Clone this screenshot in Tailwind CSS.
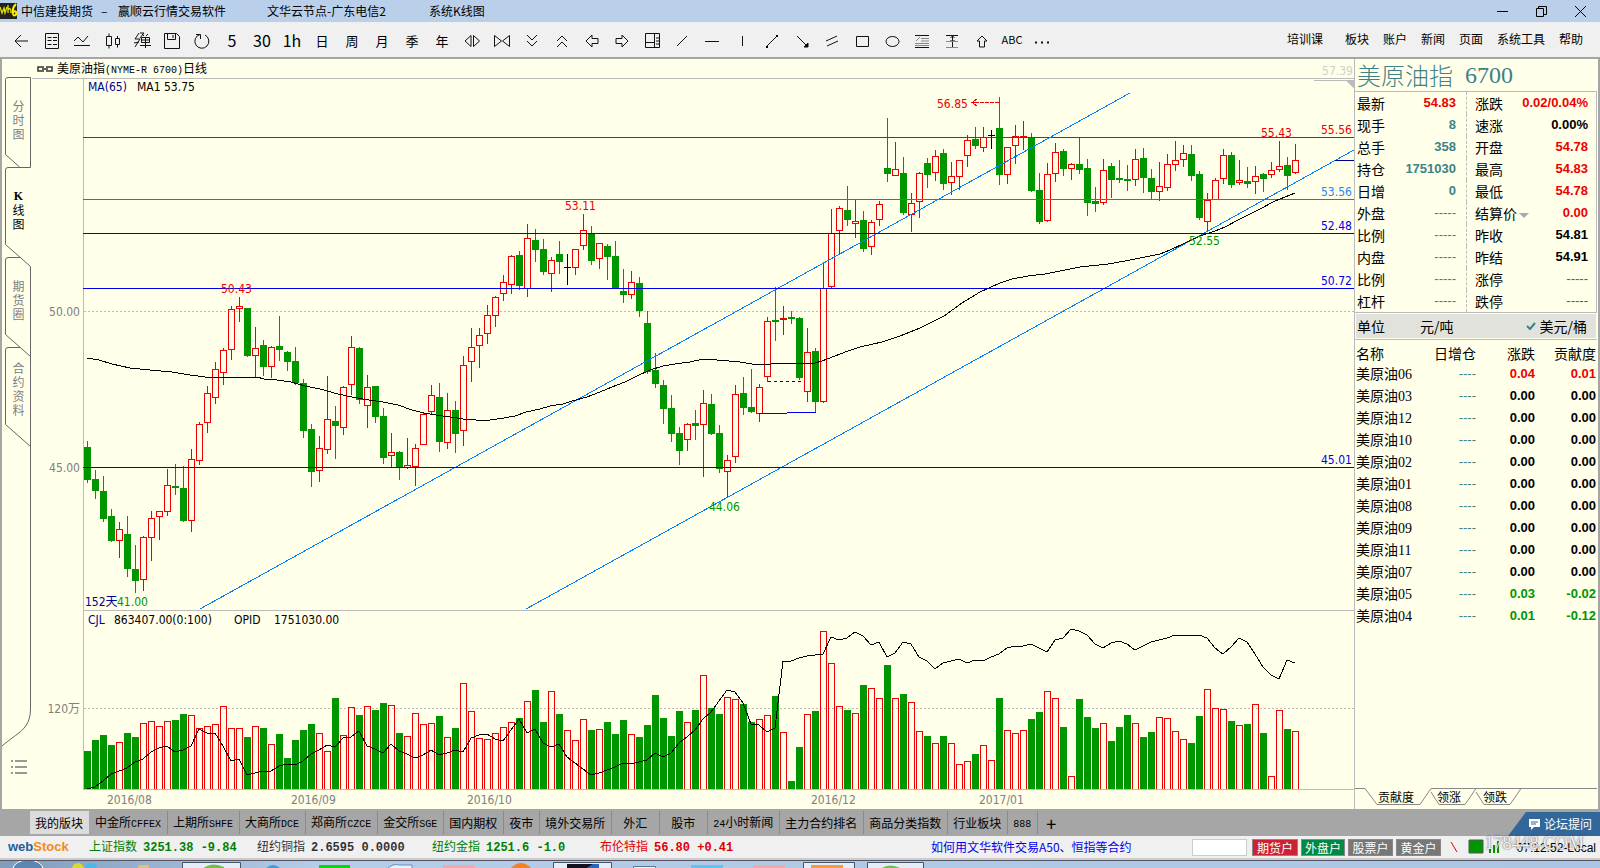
<!DOCTYPE html>
<html lang="zh-CN">
<head>
<meta charset="utf-8">
<title>中信建投期货 - 赢顺云行情交易软件</title>
<script src="https://cdn.jsdelivr.net/npm/@tailwindcss/browser@4"></script>
</head>
<body class="h-screen flex flex-col overflow-hidden bg-[#ffffea] font-['Noto_Sans_CJK_SC',sans-serif] text-xs text-black">

<header class="h-[22px] shrink-0 flex items-center bg-[#bad0ea] leading-5">
  <svg class="w-[17px] h-4 mr-1" viewBox="0 0 17 16"><rect width="17" height="16" fill="#222"/><path d="M0 4l2 6 2-5 1 5 2-6M8 2v8M8 7c2-3 3-1 3 3" stroke="#e8e000" fill="none" stroke-width="1.3"/><path d="M16 1c-3 3-4 6-3 10c1 3 4 1 3-2c-1-2-3 0-3 1" stroke="#ffee00" fill="none" stroke-width="2"/></svg>
  <h1 class="w-[246px] flex"><span class="w-20">中信建投期货</span><span class="w-[17px]">–</span>赢顺云行情交易软件</h1>
  <span class="w-[162px]">文华云节点-广东电信2</span>
  <span class="flex-1">系统K线图</span>
  <button aria-label="最小化" class="w-[39px] grid place-items-center"><svg width="11" height="11" stroke="#000"><path d="M0 5.5h11"/></svg></button>
  <button aria-label="还原" class="w-[39px] grid place-items-center"><svg width="11" height="11" fill="none" stroke="#000"><path d="M.5 2.5h7v8h-7zM2.5 2.5v-2h8v8h-3"/></svg></button>
  <button aria-label="关闭" class="w-[39px] grid place-items-center"><svg width="11" height="11" stroke="#000"><path d="M0 0l11 11M11 0L0 11"/></svg></button>
</header>

<nav class="h-[37px] shrink-0 flex items-center bg-[#f0f0f0] border-b-2 border-[#a6a6a6] pl-[7px]">
  <div id="tools" class="flex flex-1 items-center text-[13px]"></div>
  <div class="flex items-center pr-[17px] pb-0.5">
    <a href="#" class="mr-[22px]">培训课</a><a href="#" class="mr-[14px]">板块</a><a href="#" class="mr-[14px]">账户</a><a href="#" class="mr-[14px]">新闻</a><a href="#" class="mr-[14px]">页面</a><a href="#" class="mr-[14px]">系统工具</a><a href="#">帮助</a>
  </div>
</nav>

<main class="flex-1 min-h-0 flex border-x-2 border-[#a6a6a6]">
  <nav class="relative w-[30px] shrink-0 pt-[18px] flex flex-col">
    <svg class="absolute left-0 top-0 w-[30px] h-[700px]" viewBox="2 59 30 700" fill="none" stroke="#666">
      <path d="M19.5 167L5.500 154.500V79.500Q5.500 77.500 8 77.500H30.500V167.500H8Q5.500 167.500 5.500 170V244.500L30.500 266.500V708C30.500 730 18 732 2 746"/>
      <path d="M20 257.500H8Q5.500 257.500 5.500 260V334.500L30.500 356.500M20 347.500H8Q5.500 347.500 5.500 350V424.500L30.500 446.500"/>
    </svg>
    <button class="relative h-[90px] w-[33px] flex flex-col items-center pt-[22px] leading-[14px] text-[#808080]"><span>分</span><span>时</span><span>图</span></button>
    <button class="relative h-[90px] w-[33px] flex flex-col items-center pt-[22px] leading-[14px]"><b class="font-['Liberation_Serif']">K</b><span>线</span><span>图</span></button>
    <button class="relative h-[90px] w-[33px] flex flex-col items-center pt-[22px] leading-[14px] text-[#808080]"><span>期</span><span>货</span><span>圈</span></button>
    <button class="relative h-[90px] w-[33px] flex flex-col items-center pt-[14px] leading-[14px] text-[#808080]"><span>合</span><span>约</span><span>资</span><span>料</span></button>
    <button aria-label="列表" class="mt-auto mb-[35px] ml-[9px] w-4 h-[14px]"><svg width="16" height="14" stroke="#999" stroke-width="2"><path d="M0 1h2M4 1h12M0 7h2M4 7h12M0 13h2M4 13h12"/></svg></button>
  </nav>

  <section class="flex-1 min-w-0 flex flex-col">
    <div class="h-5 shrink-0 flex items-center border-b border-[#bbb]">
      <svg class="ml-[5px] mr-1" width="16" height="6" fill="none" stroke="#333" stroke-width="1.500"><path d="M7 1H1v4h6M9 1h6v4H9M5 3h6"/></svg>
      <h2>美原油指<span class="font-['Liberation_Mono'] text-[10px]">(NYME-R 6700)</span>日线</h2>
      <span class="ml-auto mr-px text-[#d0d0cc] pt-1 font-['DejaVu_Sans_Condensed','Open_Sans',sans-serif]">57.39</span>
    </div>
    <svg id="chart" class="w-full flex-1 min-h-0 text-xs font-['DejaVu_Sans_Condensed','Noto_Sans_CJK_SC',sans-serif]" viewBox="32 79 1322 730" shape-rendering="crispEdges">
      <g stroke="#bbb" fill="none"><path d="M83.500 79V789.500H1354M83 610.500H1354M1314 80.500H1354"/><path stroke-dasharray="2 2" d="M84 311.500H1354M84 708.500H1354"/></g>
      <path d="M1345 80h9v9z" fill="#bbb"/>
      <g id="bars"></g>
      <g fill="none">
        <path stroke="#ee0000" d="M83 137.500H1354"/>
        <path stroke="#0080ff" d="M83 199.500H1354M200 609L1130 93M526 609L1354 150"/>
        <path stroke="#0000ee" d="M83 233.500H1354M83 288.500H1354M83 467.500H1354M759 413.500H787M787 412.500H816"/>
        <path stroke="#000090" d="M1335 160.500H1354"/>
        <path stroke="#0000dd" stroke-dasharray="3 3" d="M768 381.500H801"/>
        <path stroke="#ee0000" stroke-dasharray="4 1" d="M975 102.500H999"/><path stroke="#ee0000" d="M977 99L972 102.500L977 106M976 102.500h-4"/>
        <polyline stroke="#000" points="87,358 99,360 112,364 130,368 150,370 172,372 190,375 205,377 223,378 257,377 264,379 277,380 291,382 305,386 320,389 338,394 352,397 369,400 383,402 398,405 412,410 424,413 436,415 450,417 463,419 476,420 490,420 504,418 515,416 526,412 540,409 550,406 563,404 572,401 587,397 600,392 612,387 625,382 637,376 650,370 663,366 675,364 690,362 703,359 717,360 740,362 752,364 763,365 780,363 815,363 822,361 835,356 848,351 860,347 882,342 900,336 920,328 944,316 962,303 980,292 1000,283 1012,279 1028,276 1045,274 1070,269 1080,267 1108,264 1125,261 1140,258 1160,254 1170,250 1185,243 1200,236 1215,231 1225,227 1240,219 1260,209 1275,201 1295,193"/>
        <polyline id="opid" stroke="#000"/>
      </g>
      <g fill="#808080">
        <text x="80" y="316" text-anchor="end">50.00</text><text x="80" y="472" text-anchor="end">45.00</text><text x="80" y="713" text-anchor="end">120万</text>
        <text x="107" y="804">2016/08</text><text x="291" y="804">2016/09</text><text x="467" y="804">2016/10</text><text x="811" y="804">2016/12</text><text x="979" y="804">2017/01</text>
      </g>
      <g fill="#000090"><text x="88" y="91">MA(65)</text><text x="85" y="606">152天</text><text x="88" y="624">CJL</text></g>
      <text x="137" y="91">MA1 53.75</text><text x="114" y="624">863407.00(0:100)</text><text x="234" y="624">OPID</text><text x="274" y="624">1751030.00</text>
      <g fill="#ee0000"><text x="221" y="293">50.43</text><text x="565" y="210">53.11</text><text x="937" y="108">56.85</text><text x="1261" y="137">55.43</text><text x="1321" y="134">55.56</text></g>
      <g fill="#009600"><text x="117" y="606">41.00</text><text x="709" y="511">44.06</text><text x="1189" y="245">52.55</text></g>
      <g fill="#0000ee"><text x="1321" y="230">52.48</text><text x="1321" y="285">50.72</text><text x="1321" y="464">45.01</text></g>
      <text x="1321" y="196" fill="#2288ee">53.56</text>
    </svg>
  </section>

  <aside class="w-[244px] shrink-0 flex flex-col border-l border-[#bbb] text-sm">
    <h2 class="h-8 flex items-center pl-[2px] text-2xl leading-8 text-[#3e8287] font-light whitespace-pre">美原油指<span class="font-['Liberation_Serif'] ml-3">6700</span></h2>
    <div class="flex border-t border-r border-[#bbb] mr-px leading-[20px]">
      <table class="w-[112px] shrink-0 border-r border-dashed border-[#bbb]"><tbody id="q1"></tbody></table>
      <table class="block flex-1 min-w-0"><tbody id="q2" class="block"></tbody></table>
    </div>
    <div class="border-y border-[#bbb] py-px mr-px">
      <div class="h-6 mx-px flex items-center bg-[#e2e2dc] pl-px"><span class="w-[63px]">单位</span><button>元/吨</button><button class="ml-auto mr-[9px] flex items-center gap-1"><svg width="10" height="8" fill="none" stroke="#3e8287" stroke-width="2"><path d="M1 4l3 3 5-6"/></svg>美元/桶</button></div>
    </div>
    <table class="w-[240px] ml-px leading-[20px]"><thead><tr class="h-[23px] align-bottom"><th class="w-[57px] font-normal text-left">名称</th><th class="font-normal text-right">日增仓</th><th class="w-[59px] font-normal text-right">涨跌</th><th class="w-[61px] font-normal text-right">贡献度</th></tr></thead><tbody id="q3"></tbody></table>
    <div class="mt-auto mb-0.5 h-5 flex items-center relative text-xs pl-[23px]">
      <svg class="absolute inset-0" width="242" height="20" fill="none" stroke="#888"><path d="M0 1.500H10L22 17.500H65L76 1.500H242M76 5L84 17.500H110L121 1.500M121 5L129 17.500H155L166 1.500"/></svg>
      <button class="relative mr-[23px]">贡献度</button><button class="relative mr-[22px]">领涨</button><button class="relative">领跌</button>
    </div>
  </aside>
</main>

<div class="relative h-[27px] shrink-0 flex bg-[#a6a6a6]">
  <nav id="boards" class="flex-1 flex items-center pl-[30px]"></nav>
  <a href="#" class="absolute right-0 bottom-0 h-6 w-[92px] flex items-center justify-end gap-1 pr-2 text-white bg-[#336699] [clip-path:polygon(18px_0,100%_0,100%_100%,0_100%)]"><svg width="11" height="11"><path d="M0 0h11v8H5l-3 3V8H0z" fill="#fff"/><path d="M2 3h7M2 5h5" stroke="#369"/></svg>论坛提问</a>
</div>

<footer class="h-6 shrink-0 flex items-center bg-[#f0f0f0] border-b-2 border-[#ccc] pl-2 pr-1 whitespace-nowrap">
  <a href="#" class="w-[81px] text-[13px] font-bold font-['Liberation_Sans'] leading-5 text-[#1f5d9c]">web<span class="text-[#f08a24]">Stock</span></a>
  <span class="w-[168px] text-[#008000]">上证指数<b class="ml-1.5 font-['Liberation_Mono']">3251.38 -9.84</b></span>
  <span class="w-[175px] text-[#333]">纽约铜指<b class="ml-1.5 font-['Liberation_Mono']">2.6595 0.0000</b></span>
  <span class="w-[168px] text-[#008000]">纽约金指<b class="ml-1.5 font-['Liberation_Mono']">1251.6 -1.0</b></span>
  <span class="w-[331px] text-[#dd0000]">布伦特指<b class="ml-1.5 font-['Liberation_Mono']">56.80 +0.41</b></span>
  <a href="#" class="text-[#0000ee]">如何用文华软件交易A50、恒指等合约</a>
  <input aria-label="代码" class="ml-auto w-[55px] h-[17px] bg-white border border-[#ccc]">
  <div class="flex gap-[3px] ml-[5px] text-white">
    <button class="w-[46px] h-[17px] leading-[15px] bg-[#cc2233] border border-[#888]">期货户</button>
    <button class="w-[44px] h-[17px] leading-[15px] bg-[#008844] border border-[#888]">外盘户</button>
    <button class="w-[45px] h-[17px] leading-[15px] bg-[#777] border border-[#888]">股票户</button>
    <button class="w-[45px] h-[17px] leading-[15px] bg-[#777] border border-[#888]">黄金户</button>
  </div>
  <svg class="ml-2 mr-2" width="52" height="16"><path d="M2 3l6 10" stroke="#dd0000"/><path d="M20 1h14v13H20z" fill="#009600" stroke="#555"/><path d="M41 14v-4M45 14V6M49 14V2" stroke="#009600" stroke-width="2"/></svg>
  <div class="relative w-[87px] text-right"><time class="font-['Liberation_Sans'] text-xs">07:12:52-Local</time><span class="absolute right-3 -top-2 font-['Liberation_Serif'] text-lg leading-6 text-white/90 [text-shadow:0_0_2px_#333]">178448.COM</span></div>
</footer>
<div class="h-2 shrink-0 overflow-hidden bg-linear-to-r from-[#7f9cbd] via-[#b4cde8] via-20% to-[#a9c6e4] border-t border-[#556]">
  <svg width="1600" height="8">
    <path d="M13 8a15 9 0 0 1 30 0" fill="#5d87b3" stroke="#fff"/>
    <circle cx="78" cy="8" r="6" fill="#d6dc2a"/><circle cx="91" cy="8" r="6" fill="#4ab8e8"/><path d="M139 4h10v4h-12z" fill="#e8c070"/>
    <path d="M182.5 8V1.500h58V8M553.500 8V1.500h58V8M803.500 8V1.500h51V8M867.500 8V1.500h56V8" fill="#e4eef8" stroke="#456"/>
    <path d="M202 8q10-8 22-2v2z" fill="#6fc04a"/><path d="M265 8q8-8 16 0z" fill="#3a9fdc"/><path d="M319 4h31v4h-31z" fill="#00dd00"/>
    <path d="M387 8q6-6 12-4h13v4z" fill="#e8f2fa" stroke="#5a93c4"/><path d="M443 4h32v4h-32z" fill="#f4a8a8"/><path d="M510 8q11-12 22 0z" fill="#f58220"/>
    <path d="M567 3h32v5h-32z" fill="#112"/><path d="M585 8l8-5h6v5z" fill="#2d68b8"/><path d="M633.500 8V5.500h22V8" fill="#dff" stroke="#579"/>
    <path d="M691 4h32v4h-32z" fill="#5cc4f8"/><path d="M753 4h32v4h-32z" fill="#f4a8a8"/><path d="M811 4h32v4h-32z" fill="#f59b3c"/><path d="M880 8q10-7 22 0z" fill="#6fc04a"/>
  </svg>
</div>

<script>
const candles = `g441,447,480,483 g470,479,491,499 g476,491,519,522 g509,516,541,542 r522,529,541,558 g516,534,569,577 g545,569,581,593 r536,537,580,591 r511,518,538,561 r511,511,517,540 r469,485,512,516 g464,486,488,495 g466,488,521,522 r449,459,521,532 r422,424,461,465 r386,393,423,433 r362,369,398,404 r348,350,373,385 r306,309,350,360 r297,306,309,322 g308,308,356,357 r327,348,356,377 g340,345,367,376 r346,347,367,378 g316,346,350,361 g351,352,362,371 g347,361,383,385 g379,383,431,438 g424,429,472,487 r436,448,471,482 r376,419,450,454 g406,421,426,459 r386,387,428,435 r336,347,385,395 g347,348,400,404 r375,387,406,428 g386,386,417,423 g408,416,458,464 r433,452,456,467 g451,452,467,480 r438,465,468,469 r444,448,467,486 r412,414,445,445 r385,395,412,414 g383,397,442,452 r393,410,443,449 g401,410,434,453 r356,365,431,446 r328,347,362,382 r328,335,346,368 r305,315,334,344 r296,297,316,327 r275,282,294,301 r255,256,285,294 g251,255,286,290 r224,238,289,297 g229,240,250,262 g239,249,272,275 r257,260,274,292 g241,254,262,274 k254,267,268,285 r249,249,268,275 r214,230,246,250 g226,233,261,265 r243,243,259,269 g244,246,257,280 g241,256,288,288 g269,291,295,303 r271,282,295,299 g277,283,311,317 g311,323,372,374 g353,370,384,388 g380,385,409,424 g395,408,434,442 g427,433,451,465 r423,424,440,451 g410,423,426,440 r390,403,425,477 g394,404,434,435 g425,433,469,473 r455,460,472,497 r385,394,457,463 g377,393,408,415 g369,407,412,413 r384,387,414,422 r317,321,377,382 g287,320,322,341 r306,318,320,335 g311,317,319,324 g317,318,378,380 r328,352,392,402 g348,351,402,413 r262,288,402,403 r209,233,287,288 r206,208,231,254 g186,210,220,226 r200,221,224,238 g211,220,249,252 r220,222,247,255 r201,204,220,226 g118,168,174,182 r142,169,176,176 g157,173,213,215 r193,203,215,232 r172,173,202,218 g158,163,175,188 r150,156,173,181 g149,153,184,190 r162,176,183,195 r160,160,177,190 r135,140,156,167 g127,139,146,149 r127,137,148,152 k130,135,136,149 g97,128,175,185 r147,147,175,184 r125,136,146,164 r121,136,138,150 g133,137,191,192 g173,190,222,224 r163,174,221,222 r143,152,174,182 g149,151,169,176 r163,164,169,180 g137,164,170,174 g159,168,203,216 g187,201,204,212 r159,170,203,205 g163,166,180,198 g160,178,180,183 g165,179,181,191 r149,159,180,186 g148,158,178,193 g169,178,192,200 r162,186,192,201 r154,164,188,191 r141,160,165,171 r145,153,160,167 g145,154,176,181 g171,174,218,220 r193,200,222,232 r178,180,200,200 r149,155,179,184 g152,155,185,188 r160,180,183,185 g167,181,184,188 r166,176,182,194 g173,174,179,192 r162,170,175,178 r141,166,170,172 g157,165,176,190 r144,160,173,174`.split(' ');
const volume = [751,740,735,745,742,733,737,723,721,726,721,720,714,715,728,726,724,706,728,728,737,726,728,744,734,758,740,730,724,733,751,698,735,707,715,706,710,703,705,733,736,713,724,723,716,737,728,683,711,738,739,733,727,722,718,701,690,722,691,714,730,740,719,730,729,722,734,720,734,737,725,695,718,736,711,722,710,675,708,714,697,699,704,722,719,715,696,732,781,747,714,711,631,663,706,710,713,685,688,698,665,698,694,702,731,736,743,736,743,764,761,754,745,760,698,730,733,730,719,712,691,698,727,776,699,717,728,723,741,727,715,723,737,732,717,718,731,739,743,716,689,708,709,721,725,724,704,733,776,710,729,731];
const interest = [789,787,781,774,771,768,762,759,752,748,746,752,750,746,729,733,733,746,761,759,775,773,771,771,766,764,765,761,754,750,745,747,738,737,731,746,749,753,744,751,754,758,755,750,755,753,750,752,738,735,734,739,741,730,719,733,729,743,747,744,757,763,769,775,773,770,767,763,764,762,760,753,757,753,743,737,730,719,712,701,690,692,703,724,725,732,728,661,661,658,656,655,654,637,640,638,632,636,645,642,657,653,642,644,657,661,669,663,661,659,663,660,661,657,654,648,646,646,644,648,652,640,638,629,631,635,644,648,643,641,644,650,646,642,640,638,635,635,635,635,638,648,654,647,638,642,654,667,675,679,660,663];
const color = { r: '#ee0000', g: '#009600', k: '#000000' };
let out = '';
candles.forEach((c, i) => {
  const k = c[0], [hi, top, bot, lo] = c.slice(1).split(',').map(Number), x = 87 + 8 * i, f = color[k];
  if (k === 'r' && bot - top > 2) {
    out += `<path fill="none" stroke="${f}" d="M${x + .5} ${hi}V${top}M${x + .5} ${bot}V${lo}M${x - 2.5} ${top + .5}h6V${bot - .5}h-6z"/>`;
  } else {
    out += `<path fill="${f}" d="M${x} ${hi}h1V${lo}h-1zM${x - 3} ${top}h7V${bot}h-7z"/>`;
  }
  const v = volume[i];
  out += k === 'g' ? `<path fill="${f}" d="M${x - 3} ${v}h7V789h-7z"/>` : `<path fill="none" stroke="#ee0000" d="M${x - 2.5} 789V${v + .5}h6V789"/>`;
});
document.getElementById('bars').innerHTML = out;
document.getElementById('opid').setAttribute('points', interest.map((y, i) => `${87 + 8 * i},${y}`).join(' '));

const tone = { r: 'text-[#ee0000]', g: 'text-[#009600]', t: 'text-[#3e8287]', k: 'text-black' };
const num = "font-['Liberation_Sans'] text-[13px] text-right";
const cell = (v, t, pad = '') => `<td class="${num} ${pad} ${v.startsWith('---') ? '' : 'font-bold'} ${tone[t]}">${v}</td>`;
document.getElementById('q1').innerHTML = [['最新','54.83','r'],['现手','8','t'],['总手','358','t'],['持仓','1751030','t'],['日增','0','t'],['外盘','-----','t'],['比例','-----','t'],['内盘','-----','t'],['比例','-----','t'],['杠杆','-----','t']]
  .map(([a, b, t]) => `<tr class="h-[22px]"><th class="font-normal text-left pl-0.5">${a}</th>${cell(b, t, 'pr-2.5')}</tr>`).join('');
document.getElementById('q2').innerHTML = [['涨跌','0.02/0.04%','r'],['速涨','0.00%','k'],['开盘','54.78','r'],['最高','54.83','r'],['最低','54.78','r'],['结算价','0.00','r'],['昨收','54.81','k'],['昨结','54.91','k'],['涨停','-----','g'],['跌停','-----','g']]
  .map(([a, b, t]) => `<tr class="flex items-center justify-between h-[22px]"><th class="font-normal text-left pl-2 whitespace-nowrap">${a}${a === '结算价' ? '<svg class="inline ml-0.5" width="10" height="5"><path d="M0 0h10l-5 5z" fill="#aaa"/></svg>' : ''}</th>${cell(b, t, 'pr-2')}</tr>`).join('');
document.getElementById('q3').innerHTML = [['06','0.04','0.01','r'],['03'],['12'],['10'],['02'],['01'],['08'],['09'],['11'],['07'],['05','0.03','-0.02','g'],['04','0.01','-0.12','g']]
  .map(([n, a = '0.00', b = '0.00', t = 'k']) => `<tr class="h-[22px]"><th class="font-normal text-left whitespace-nowrap leading-[18px]">美原油<span class="font-['Liberation_Serif']">${n}</span></th>${cell('----', 't')}${cell(a, t)}${cell(b, t)}</tr>`).join('');

const icons = [
  ['后退','<path d="M16 10H4M9 4l-6 6 6 6"/>'],
  ['报价','<path d="M3.500 2.500h13v15h-13zM5.500 6.500h4M11 6.500h4M5.500 9.500h4M11 9.500h4M5.500 13.500h4M11 13.500h4"/>'],
  ['分时','<path d="M2 10l4-4 5 5 5-6M2 14.500h16"/>'],
  ['K线','<path d="M4.500 5.500h5v9h-5zM7 2.500v3M7 14.500v3M13.500 7.500h4v6h-4zM15.500 5v2.500M15.500 13.500v3"/>'],
  ['闪电下单','<path d="M7 2L3 8h5l-5 8M8 2h4L8 7M2 12l5-1M10 3l2 2M16 3l-2 2M9.500 6.500h8v5h-8zM9.500 9h8M13.500 6v11M8 14.500h11"/>'],
  ['保存','<path d="M2.500 2.500h12l3 3v12h-15zM5.500 2.500v6h8v-6M11 4v3"/>'],
  ['刷新','<path d="M8 3.500A7 7 0 1 0 13 4M4 3.500h4.500V8"/>'],
  ['5分钟','5'],['30分钟','30'],['1小时','1h'],['日','日'],['周','周'],['月','月'],['季','季'],['年','年'],
  ['放大','<path d="M9 4.500L3 10l6 5.500zM11.500 4.500l6 5.500-6 5.500z"/>'],
  ['缩小','<path d="M2.500 4.500l7 5.500-7 5.500zM17.500 4.500l-7 5.500 7 5.500z"/>'],
  ['向下','<path d="M5 4l5 5 5-5M5 10l5 5 5-5"/>'],
  ['向上','<path d="M5 10l5-5 5 5M5 16l5-5 5 5"/>'],
  ['左','<path d="M4 10l6-6v3.500h6v5h-6V16z"/>'],
  ['右','<path d="M16 10l-6-6v3.500H4v5h6V16z"/>'],
  ['窗口','<path d="M3.500 2.500h14v14h-14zM12.500 2.500v14M3.500 11.500h9M14 7h3M14 10h3M14 13h3"/>'],
  ['斜线','<path d="M5 15L15 5"/>'],['横线','<path d="M3 10.500h14"/>'],['竖线','<path d="M10.500 5v10"/>'],
  ['线段','<path d="M5 15L15 5"/><path d="M4 15h2v2H4zM14 4h2v2h-2z" fill="#000" stroke="none"/>'],
  ['射线','<path d="M5 5l10 10"/><path d="M16 16v-4l-4 4z" fill="#000"/>'],
  ['平行线','<path d="M4 10l11-5M5 15l11-5"/>'],
  ['矩形','<path d="M4.500 5.500h12v10h-12z"/>'],
  ['椭圆','<ellipse cx="10.500" cy="10.500" rx="6.500" ry="5"/>'],
  ['黄金分割','<path d="M3 4.500h14M3 16.500h14"/><path d="M9 7.500h8M9 10h8M3 12.500h14M3 14.500h14M4 10l4-4" stroke="#888"/>'],
  ['标尺','<path d="M4 4.500h12M10.500 5v11M8.500 7l2-2 2 2M8.500 9l2 2 2-2"/><path d="M4 10.500h12M4 16.500h12" stroke="#888"/>'],
  ['箭头','<path d="M10 5l5 5h-2.500v6h-5v-6H5z"/>'],
  ['文字','ABC'],['更多','<path d="M3 11.500h2M9 11.500h2M15 11.500h2" stroke-width="2"/>']
];
document.getElementById('tools').innerHTML = icons.map(([n, g]) =>
  `<button aria-label="${n}" class="w-[30px] shrink-0 h-6 grid place-items-center ${n.match(/分钟|小时/) ? 'text-base' : n === '文字' ? 'text-[11px]' : 'pt-0.5'}">${g[0] === '<' ? `<svg width="20" height="20" fill="none" stroke="#111">${g}</svg>` : g}</button>`).join('');

const latin = s => s.replace(/[A-Z0-9]+/g, m => `<span class="font-['Liberation_Mono'] text-[10px]">${m}</span>`);
document.getElementById('boards').innerHTML = ['我的版块','中金所CFFEX','上期所SHFE','大商所DCE','郑商所CZCE','金交所SGE','国内期权','夜市','境外交易所','外汇','股市','24小时新闻','主力合约排名','商品分类指数','行业板块','888','+']
  .map((b, i) => `<button class="h-[23px] whitespace-nowrap ${i ? (i > 1 ? 'border-l border-[#8a8a8a]' : 'border-l border-transparent') : 'bg-[#dcdcdc] pl-1.5'} ${b === '外汇' || b === '股市' ? 'pl-[11px] pr-3' : b === '+' ? 'pl-2 pr-3 text-lg leading-5' : 'pl-[5px] pr-1.5'}">${latin(b)}</button>`).join('');
</script>
</body>
</html>
